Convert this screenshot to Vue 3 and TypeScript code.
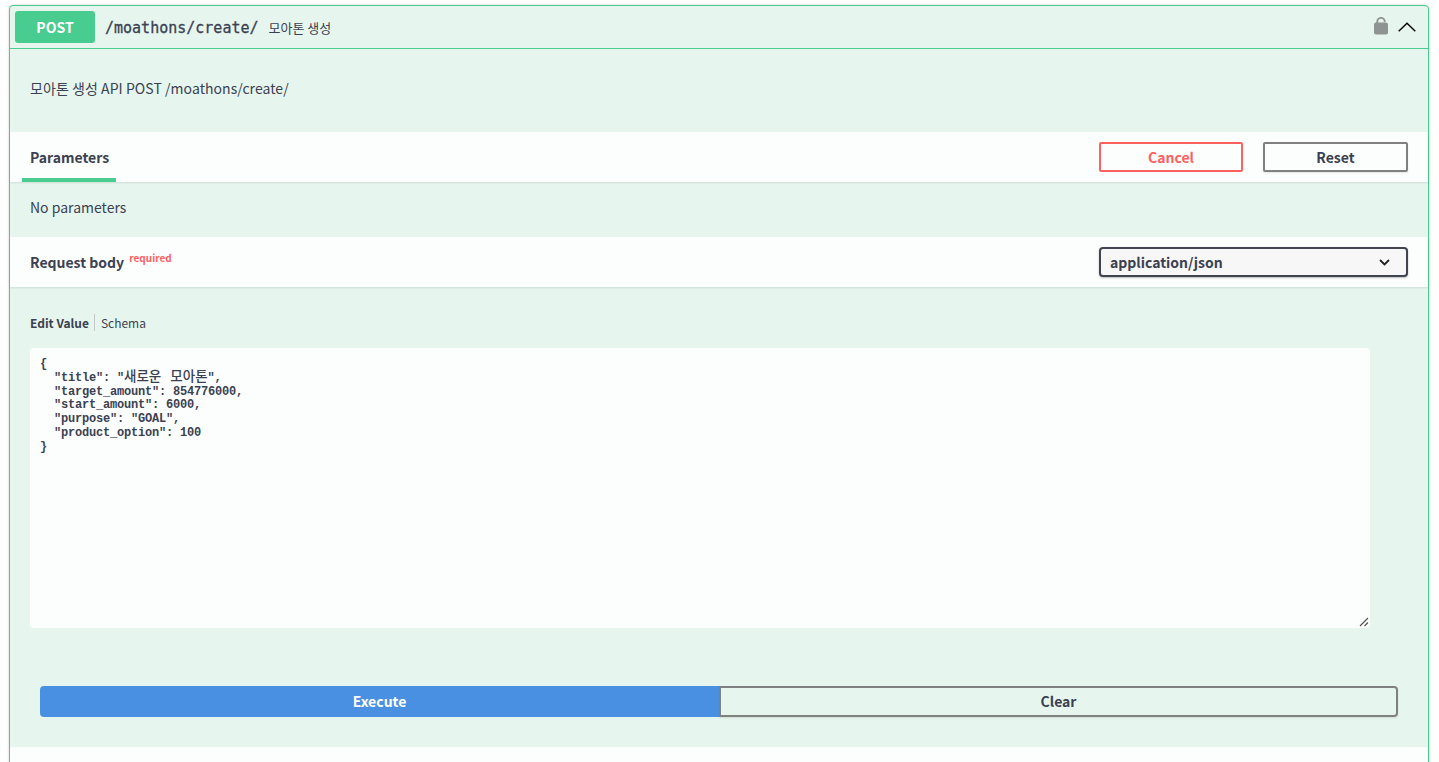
<script setup lang="ts">
const before = `{
  "title": "`
const title = "새로운 모아톤"
const after = `",
  "target_amount": 854776000,
  "start_amount": 6000,
  "purpose": "GOAL",
  "product_option": 100
}`
</script>

<template>
  <div class="page">
    <section class="opblock">
      <header class="summary">
        <span class="method">POST</span>
        <span class="path">/moathons/create/</span>
        <span class="summary-desc">모아톤 생성</span>
        <span class="summary-icons">
          <svg class="lock" width="14" height="18" viewBox="0 0 14 18">
            <path d="M3.300 6.500V4.600a3.700 3.700 0 0 1 7.400 0V5" fill="none" stroke="#8e9492" stroke-width="1.900" />
            <rect x="0" y="5.500" width="14" height="12" rx="2" fill="#8e9492" />
          </svg>
          <svg class="chevron" width="18" height="10" viewBox="0 0 18 10">
            <path d="M0.700 9.300 9 1.200 17.300 9.300" fill="none" stroke="#000" stroke-width="1.400" />
          </svg>
        </span>
      </header>

      <div class="desc">모아톤 생성 API POST /moathons/create/</div>

      <div class="section-header tabs-header">
        <div class="tab">Parameters</div>
        <div class="actions">
          <button class="btn cancel">Cancel</button>
          <button class="btn reset">Reset</button>
        </div>
      </div>

      <div class="no-params">No parameters</div>

      <div class="section-header body-header">
        <div class="body-title">Request body <sup>required</sup></div>
        <div class="select">
          <span>application/json</span>
          <svg width="11" height="7" viewBox="0 0 11 7">
            <path d="M1 1 5.500 5.500 10 1" fill="none" stroke="#222" stroke-width="1.800" />
          </svg>
        </div>
      </div>

      <div class="body-content">
        <div class="value-tabs">
          <span class="active">Edit Value</span>
          <span class="divider"></span>
          <span>Schema</span>
        </div>
        <div class="editor">
          <pre class="code">{{ before }}<span class="ko">{{ title }}</span>{{ after }}</pre>
          <svg class="grip" width="10" height="10" viewBox="0 0 10 10">
            <path d="M1 9 9 1M5.500 9 9 5.500" stroke="#555" stroke-width="1.200" fill="none" />
          </svg>
        </div>
        <div class="exec-row">
          <button class="exec">Execute</button>
          <button class="clear">Clear</button>
        </div>
      </div>
      <div class="tail"></div>
    </section>
  </div>
</template>

<style scoped>
.page {
  height: 762px;
  overflow: hidden;
  padding: 5px 10px 0 9px;
  box-sizing: border-box;
  font-family: "Noto Sans CJK KR", "Noto Sans", sans-serif;
  color: #3b4151;
}
.opblock {
  height: 800px;
  border: 1px solid #49cc90;
  border-radius: 4px;
  background: #e6f6ee;
  box-shadow: 0 0 3px rgba(0, 0, 0, 0.19);
  display: flex;
  flex-direction: column;
}
.summary {
  height: 42px;
  flex: none;
  border-bottom: 1px solid #49cc90;
  display: flex;
  align-items: center;
  padding: 0 5px;
}
.method {
  width: 80px;
  height: 32px;
  background: #49cc90;
  border-radius: 3px;
  color: #fff;
  font-size: 14px;
  font-weight: 700;
  display: flex;
  align-items: center;
  justify-content: center;
}
.path {
  margin-left: 10px;
  padding-top: 2px;
  font-family: "DejaVu Sans Mono", "Liberation Mono", monospace;
  font-size: 15px;
  font-weight: 400;
  color: #3b4151;
  -webkit-text-stroke: 0.3px #3b4151;
}
.summary-desc {
  margin-left: 10px;
  font-size: 13px;
}
.summary-icons {
  margin-left: auto;
  display: flex;
  align-items: center;
  gap: 10px;
  padding-right: 7px;
}
.lock {
  margin-bottom: 2px;
}
.desc {
  height: 83px;
  flex: none;
  box-sizing: border-box;
  padding-top: 29px;
  padding-left: 20px;
  font-size: 14px;
  line-height: 20px;
  letter-spacing: 0.06px;
}
.section-header {
  flex: none;
  background: #fcfefd;
  box-shadow: 0 1px 2px rgba(0, 0, 0, 0.1);
  display: flex;
  align-items: center;
  justify-content: space-between;
  padding: 0 20px;
}
.tabs-header {
  height: 50px;
}
.tab {
  align-self: stretch;
  margin-left: -8px;
  width: 94px;
  box-sizing: border-box;
  padding-left: 8px;
  border-bottom: 4px solid #49cc90;
  font-size: 14px;
  font-weight: 700;
  line-height: 50px;
}
.actions {
  display: flex;
  gap: 20px;
}
.btn {
  height: 30px;
  box-sizing: border-box;
  background: transparent;
  border-radius: 2px;
  font-family: inherit;
  font-size: 14px;
  font-weight: 700;
  padding: 0;
  color: #3b4151;
}
.cancel {
  width: 144px;
  border: 2px solid #ff6060;
  color: #ff6060;
}
.reset {
  width: 145px;
  border: 2px solid #808080;
  box-shadow: 0 1px 2px rgba(0, 0, 0, 0.1);
}
.no-params {
  height: 55px;
  flex: none;
  box-sizing: border-box;
  padding-left: 20px;
  padding-top: 15px;
  font-size: 14px;
  line-height: 20px;
}
.body-header {
  height: 50px;
}
.body-title {
  font-size: 14px;
  font-weight: 700;
}
.body-title sup {
  position: relative;
  top: -6px;
  vertical-align: baseline;
  margin-left: 2px;
  font-size: 10px;
  font-weight: 700;
  color: #ff6060;
}
.select {
  width: 309px;
  height: 30px;
  box-sizing: border-box;
  border: 2px solid #41444e;
  border-radius: 4px;
  background: #f7f7f7;
  box-shadow: 0 1px 2px rgba(0, 0, 0, 0.25);
  display: flex;
  align-items: center;
  justify-content: space-between;
  padding: 0 16px 0 9px;
  font-size: 14px;
  font-weight: 700;
}
.body-content {
  height: 460px;
  flex: none;
  box-sizing: border-box;
  padding: 25px 20px 0;
  display: flex;
  flex-direction: column;
}
.value-tabs {
  height: 20px;
  display: flex;
  align-items: center;
  font-size: 12px;
}
.value-tabs .active {
  font-weight: 700;
}
.divider {
  width: 1px;
  height: 17px;
  background: #c3c8c6;
  margin: 0 6px 0 5px;
}
.editor {
  position: relative;
  margin-top: 16px;
  width: 1340px;
  height: 280px;
  background: #fcfefd;
  border-radius: 4px;
}
.code {
  margin: 0;
  padding: 10px;
  font-family: "Liberation Mono", "Noto Sans CJK KR", monospace;
  font-size: 12px;
  font-weight: 700;
  line-height: 13.800px;
  letter-spacing: -0.2px;
  color: #3b4151;
}
.ko {
  font-family: "Noto Sans CJK KR", sans-serif;
  font-size: 13.500px;
  font-weight: 500;
  line-height: 0;
  letter-spacing: 0;
  word-spacing: 6px;
}
.grip {
  position: absolute;
  right: 1px;
  bottom: 1px;
}
.exec-row {
  display: grid;
  grid-template-columns: 1fr 1fr;
  margin: 58px 10px 0 10px;
  height: 31px;
}
.exec,
.clear {
  box-sizing: border-box;
  font-family: inherit;
  font-size: 14px;
  font-weight: 700;
  padding: 0 0 2px;
}
.exec {
  background: #4a90e2;
  border: none;
  color: #fff;
  border-radius: 4px 0 0 4px;
}
.clear {
  background: transparent;
  border: 2px solid #808080;
  border-radius: 0 4px 4px 0;
  color: #3b4151;
  box-shadow: 0 1px 2px rgba(0, 0, 0, 0.1);
}
.tail {
  flex: 1;
  background: #fcfefd;
}
</style>
